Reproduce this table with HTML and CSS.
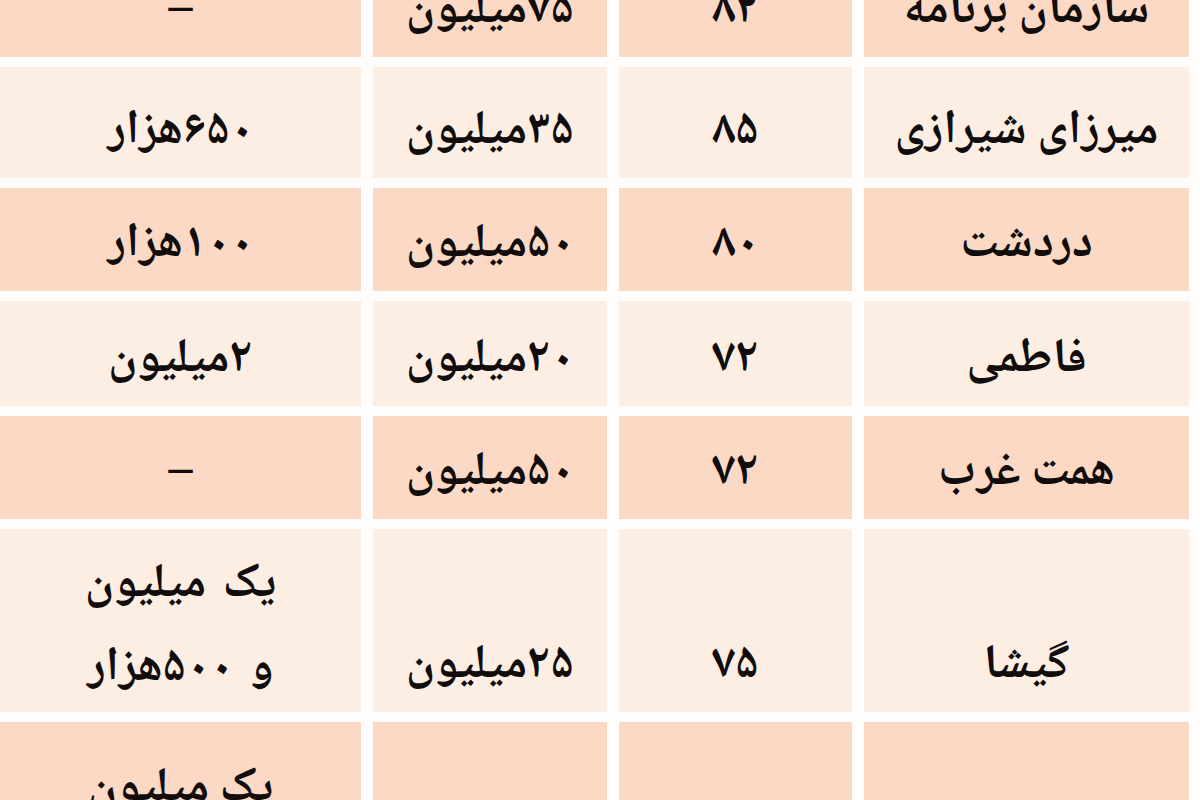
FILE: index.html
```html
<!DOCTYPE html>
<html lang="fa" dir="rtl">
<head>
<meta charset="utf-8">
<title>جدول قیمت</title>
<link rel="stylesheet" href="styles.css">
</head>
<body>
<div class="page">
  <div class="table">
    <div class="row dark r-first">
      <div class="cell">سازمان برنامه</div>
      <div class="cell">۸۲</div>
      <div class="cell">۷۵میلیون</div>
      <div class="cell">–</div>
    </div>
    <div class="row light r-2">
      <div class="cell">میرزای شیرازی</div>
      <div class="cell">۸۵</div>
      <div class="cell">۳۵میلیون</div>
      <div class="cell">۶۵۰هزار</div>
    </div>
    <div class="row dark r-3">
      <div class="cell">دردشت</div>
      <div class="cell">۸۰</div>
      <div class="cell">۵۰میلیون</div>
      <div class="cell">۱۰۰هزار</div>
    </div>
    <div class="row light r-4">
      <div class="cell">فاطمی</div>
      <div class="cell">۷۲</div>
      <div class="cell">۲۰میلیون</div>
      <div class="cell">۲میلیون</div>
    </div>
    <div class="row dark r-5">
      <div class="cell">همت غرب</div>
      <div class="cell">۷۲</div>
      <div class="cell">۵۰میلیون</div>
      <div class="cell">–</div>
    </div>
    <div class="row light r-6">
      <div class="cell">گیشا</div>
      <div class="cell">۷۵</div>
      <div class="cell">۲۵میلیون</div>
      <div class="cell multi">یک میلیون<br>و ۵۰۰هزار</div>
    </div>
    <div class="row dark r-7">
      <div class="cell"></div>
      <div class="cell"></div>
      <div class="cell"></div>
      <div class="cell top">یک میلیون</div>
    </div>
  </div>
</div>
</body>
</html>
```
FILE: styles.css
```css
html, body {
  margin: 0;
  padding: 0;
  background: #ffffff;
}

.page {
  height: 100vh;
  overflow: hidden;
  background: #fffdfb;
}

.table {
  direction: rtl;
  display: flex;
  flex-direction: column;
  gap: 10px;
  margin-top: -47px;
  padding-inline-start: 11px;
  font-family: "Noto Naskh Arabic", "DejaVu Sans", sans-serif;
  font-weight: bold;
  font-size: 48px;
  color: #110d0d;
}

.row {
  display: grid;
  grid-template-columns: 325px 233px 234px 1fr;
  column-gap: 12px;
}

.r-first { height: 104px; }
.r-2 { height: 111px; }
.r-3 { height: 103px; }
.r-4 { height: 105px; }
.r-5 { height: 103px; }
.r-6 { height: 183px; }
.r-7 { height: 183px; }

.dark .cell { background: #fcd9c4; }
.light .cell { background: #fdeee4; }

.cell {
  display: flex;
  align-items: flex-end;
  justify-content: center;
  text-align: center;
  line-height: 82px;
  padding-bottom: 4px;
  box-sizing: border-box;
}

.cell.multi {
  padding-bottom: 0;
  line-height: 84px;
  word-spacing: 6px;
}

.cell.top {
  align-items: flex-start;
  padding-bottom: 0;
  padding-top: 27px;
}
```
